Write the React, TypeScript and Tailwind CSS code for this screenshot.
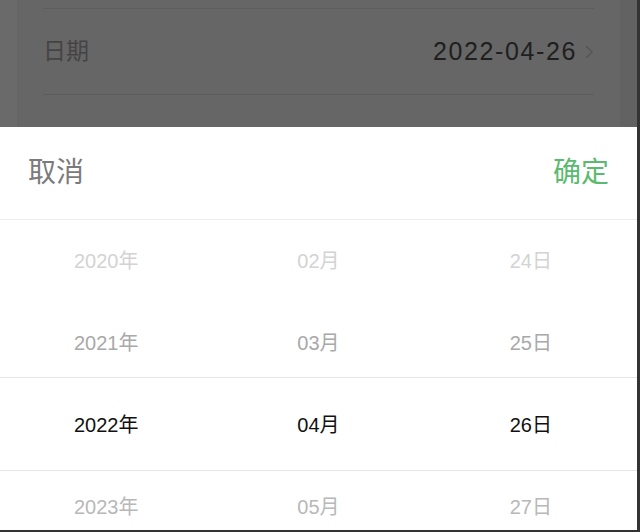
import React from "react";

const FONT = "font-['Liberation_Sans','Noto_Sans_CJK_SC',sans-serif]";

const YEARS = ["2020年", "2021年", "2022年", "2023年"];
const MONTHS = ["02月", "03月", "04月", "05月"];
const DAYS = ["24日", "25日", "26日", "27日"];

const ROW_COLORS = ["text-[#d3d3d3]", "text-[#a9a9a9]", "text-[#111111]", "text-[#b8b8b8]"];

function PickerRow({ index }: { index: number }) {
  return (
    <div className={`grid h-[82px] shrink-0 grid-cols-3 items-center text-[20px] leading-none ${ROW_COLORS[index]}`}>
      <div className="text-center">{YEARS[index]}</div>
      <div className="text-center">{MONTHS[index]}</div>
      <div className="text-center">{DAYS[index]}</div>
    </div>
  );
}

export default function App() {
  return (
    <div className={`flex h-[532px] w-[640px] flex-col overflow-hidden border-r-[3px] border-b-2 border-[#333333] bg-white ${FONT}`}>
      {/* dimmed form behind the sheet */}
      <div className="flex h-[127px] shrink-0 bg-[#666666]">
        <div className="w-[17px] bg-[#6a6a6a]" />
        <div className="flex flex-1 flex-col px-[26px]">
          <div className="h-[9px] border-b border-[#5d5d5d]" />
          <div className="flex h-[86px] items-center justify-between border-b border-[#5d5d5d]">
            <span className="text-[23px] text-[#444444]">日期</span>
            <span className="flex items-center gap-[7px] text-[25px] tracking-[1.6px] text-[#1f1f1f]">
              2022-04-26
              <svg width="10" height="16" viewBox="0 0 10 16" fill="none">
                <path d="M2 2l6 6-6 6" stroke="#555555" strokeWidth="1.5" />
              </svg>
            </span>
          </div>
        </div>
        <div className="w-[17px] bg-[#626262]" />
      </div>

      {/* sheet header */}
      <div className="flex h-[93px] shrink-0 items-center justify-between border-b border-[#eeeeee] px-[28px] text-[28px]">
        <span className="text-[#7b7b7b]">取消</span>
        <span className="text-[#5bba6f]">确定</span>
      </div>

      {/* picker */}
      <div className="relative flex flex-col">
        {YEARS.map((_, i) => (
          <PickerRow key={i} index={i} />
        ))}
        {/* selection indicator */}
        <div className="pointer-events-none absolute inset-x-0 top-[157px] h-[94px] border-y border-[#e6e6e6]" />
      </div>
    </div>
  );
}
